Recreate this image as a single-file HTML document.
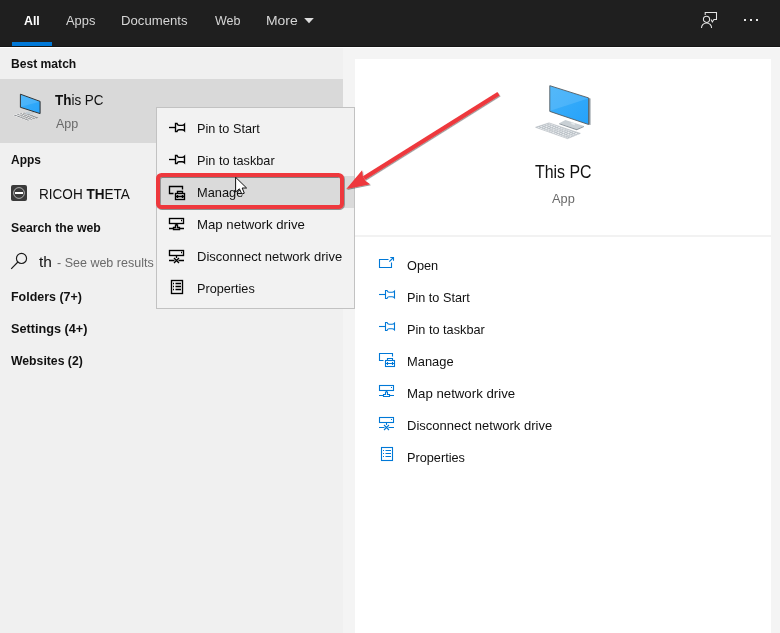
<!DOCTYPE html>
<html><head><meta charset="utf-8"><title>Search</title>
<style>
html,body{margin:0;padding:0}
body{width:780px;height:633px;position:relative;overflow:hidden;background:#f0f0f0;font-family:"Liberation Sans",sans-serif}
.a{position:absolute}
.t{position:absolute;white-space:nowrap;line-height:1;transform-origin:0 0}
.t b{font-weight:700}
svg{overflow:visible}
</style></head><body>

<div class="a" style="left:0;top:0;width:780px;height:46px;background:#1f1f1f"></div>
<div class="a" style="left:0;top:46px;width:780px;height:1px;background:#151515"></div>
<div class="a" style="left:0;top:47px;width:780px;height:1px;background:#ffffff"></div>
<div class="a" style="left:12px;top:42px;width:40px;height:4px;background:#0078d7"></div>
<div class="a" style="left:343px;top:48px;width:437px;height:585px;background:#f4f4f4"></div>
<div class="a" style="left:355px;top:59px;width:416px;height:574px;background:#ffffff"></div>
<div class="a" style="left:355px;top:235px;width:416px;height:2px;background:#f2f2f2"></div>
<div class="a" style="left:0;top:79px;width:343px;height:64px;background:#d9d9d9"></div>
<svg class="a" style="left:303px;top:17px" width="12" height="7" viewBox="0 0 12 7"><path d="M1.2 0.9H10.8L6 6.2Z" fill="#dcdcdc"/></svg>
<svg class="a" style="left:700px;top:10px" width="20" height="20" viewBox="0 0 20 20"><g fill="none" stroke="#e4e4e4" stroke-width="1.05"><path d="M5.2 4.9V2.5H16.5V9.5H13.9L12.3 12L11.1 9.6"/><circle cx="6.5" cy="9.3" r="3.1"/><path d="M1.5 17.9A5.05 5 0 0 1 11.6 17.9"/></g></svg>
<div class="a" style="left:744px;top:19px;width:2px;height:2px;background:#e6e6e6"></div>
<div class="a" style="left:750px;top:19px;width:2px;height:2px;background:#e6e6e6"></div>
<div class="a" style="left:756px;top:19px;width:2px;height:2px;background:#e6e6e6"></div>
<svg class="a" style="left:0;top:0" width="60" height="140" viewBox="0 0 60 140"><defs><linearGradient id="g1" x1="0" y1="0" x2="1" y2="1"><stop offset="0" stop-color="#3fb0f8"/><stop offset="1" stop-color="#25a2fb"/></linearGradient></defs><path d="M12.9 115.3L24.6 112.3L36.2 117.9L28.2 120.9Z" fill="#f3f3f3"/><g transform="matrix(15.3 5.6 11.7 -3.0 12.9 115.3)"><path d="M0.04 0.125H0.96" stroke="#4b5055" stroke-width="0.15" stroke-dasharray="0.045 0.04" fill="none"/><path d="M0.04 0.375H0.96" stroke="#4b5055" stroke-width="0.15" stroke-dasharray="0.045 0.04" fill="none"/><path d="M0.04 0.625H0.96" stroke="#4b5055" stroke-width="0.15" stroke-dasharray="0.045 0.04" fill="none"/><path d="M0.04 0.875H0.96" stroke="#4b5055" stroke-width="0.15" stroke-dasharray="0.045 0.04" fill="none"/></g><ellipse cx="28.8" cy="113" rx="3.4" ry="1.3" fill="#c3cdd4"/><path d="M33 111V113.4" stroke="#aab4bb" stroke-width="0.9"/><path d="M20.4 94.2L40.1 101.4V113.6L20.4 107.3Z" fill="url(#g1)" stroke="#2b2b2b" stroke-width="0.95"/><path d="M20.9 95L39.6 101.8L20.9 106.7Z" fill="#7fcbfb" opacity="0.3"/></svg>
<svg class="a" style="left:11px;top:185px" width="16" height="16" viewBox="0 0 16 16"><rect x="0" y="0" width="16" height="16" rx="2" fill="#3a3a3a"/><circle cx="8" cy="8" r="5.4" fill="none" stroke="#fff" stroke-width="0.7" opacity="0.85"/><rect x="4" y="7" width="8" height="2" fill="#fff"/></svg>
<svg class="a" style="left:10px;top:252px" width="18" height="18" viewBox="0 0 18 18"><g fill="none" stroke="#1a1a1a" stroke-width="1.15"><circle cx="11.5" cy="6.4" r="5.05"/><path d="M7.9 10L1.2 16.9"/></g></svg>
<div class="a" style="left:156px;top:107px;width:197px;height:200px;background:#f2f2f2;border:1px solid #c2c2c2"></div>
<div class="a" style="left:157px;top:176px;width:197px;height:32px;background:#dadada"></div>
<svg class="a" style="left:169px;top:119px" width="16" height="16" viewBox="0 0 16 16"><g fill="none" stroke="#000000" stroke-width="1.35"><path d="M0 8.5H6.5"/><path d="M6.5 4.5H8Q8.7 6.3 10 6.3H13Q14.5 6.3 15.5 5.2V11.8Q14.5 10.7 13 10.7H10Q8.7 10.7 8 12.5H6.5Z"/></g></svg>
<svg class="a" style="left:169px;top:151px" width="16" height="16" viewBox="0 0 16 16"><g fill="none" stroke="#000000" stroke-width="1.35"><path d="M0 8.5H6.5"/><path d="M6.5 4.5H8Q8.7 6.3 10 6.3H13Q14.5 6.3 15.5 5.2V11.8Q14.5 10.7 13 10.7H10Q8.7 10.7 8 12.5H6.5Z"/></g></svg>
<svg class="a" style="left:169px;top:185px" width="16" height="16" viewBox="0 0 16 16"><g fill="none" stroke="#000000" stroke-width="1.35"><path d="M13.5 4.5V1.5H0.5V8.5H4.5"/><rect x="6.5" y="8.5" width="9" height="6"/><path d="M8.5 8.5V6.5H13.5V8.5"/><path d="M6.5 11.5H15.5M8.5 10V13M13.5 10V13"/></g></svg>
<svg class="a" style="left:169px;top:217px" width="16" height="16" viewBox="0 0 16 16"><g fill="none" stroke="#000000" stroke-width="1.35"><rect x="0.5" y="1.5" width="14" height="5"/><path d="M12 3.5H13"/><path d="M6.5 8H8.5V10.5H10.5V12.5H4.5V10.5H6.5Z"/><path d="M7.5 6.5V8"/><path d="M0 11.5H4.5M10.5 11.5H15"/></g></svg>
<svg class="a" style="left:169px;top:249px" width="16" height="16" viewBox="0 0 16 16"><g fill="none" stroke="#000000" stroke-width="1.35"><rect x="0.5" y="1.5" width="14" height="5"/><path d="M12 3.5H13"/><path d="M7.5 6.5V9"/><path d="M5 9L10 14M10 9L5 14"/><path d="M0 11.5H5.5M9.5 11.5H15"/></g></svg>
<svg class="a" style="left:169px;top:279px" width="16" height="16" viewBox="0 0 16 16"><g fill="none" stroke="#000000" stroke-width="1.35"><rect x="2.5" y="1.5" width="11" height="13"/><path d="M4 4.5H5M4 7.5H5M4 10.5H5M6.5 4.5H12M6.5 7.5H12M6.5 10.5H12"/></g></svg>
<svg class="a" style="left:530px;top:80px" width="66" height="62" viewBox="0 0 66 62"><defs><linearGradient id="g2" x1="0" y1="0" x2="1" y2="1"><stop offset="0" stop-color="#3fb0f8"/><stop offset="1" stop-color="#25a2fb"/></linearGradient></defs>
<path d="M5.6 47.3L19 42.9L50.3 53.4L37.5 58.6Z" fill="#b7bec4" stroke="#b9bfc4" stroke-width="0.7"/>
<g transform="matrix(31.9 11.3 13.4 -4.4 5.6 47.3)"><path d="M0.03 0.100H0.97" stroke="#eef0f2" stroke-width="0.12" stroke-dasharray="0.052 0.024" fill="none"/><path d="M0.03 0.300H0.97" stroke="#eef0f2" stroke-width="0.12" stroke-dasharray="0.052 0.024" fill="none"/><path d="M0.03 0.500H0.97" stroke="#eef0f2" stroke-width="0.12" stroke-dasharray="0.052 0.024" fill="none"/><path d="M0.03 0.700H0.97" stroke="#eef0f2" stroke-width="0.12" stroke-dasharray="0.052 0.024" fill="none"/><path d="M0.03 0.900H0.97" stroke="#eef0f2" stroke-width="0.12" stroke-dasharray="0.052 0.024" fill="none"/></g>
<path d="M29.3 43.2L35.4 40.1L53.9 46L46.7 49.1Z" fill="#c9d0d5"/>
<path d="M29.3 43.2L46.7 49.1L53.9 46V47.1L46.7 50.2L29.3 44.3Z" fill="#8f989f"/>
<path d="M41.3 42.2L44.8 43.3V45.2L41.3 44.1Z" fill="#e4e8eb"/>
<path d="M58.6 17.9L60.5 18.5V45.1L58.6 44.5Z" fill="#8a949b"/>
<path d="M19.8 5.7L58.6 17.9V44.5L19.8 31.4Z" fill="url(#g2)" stroke="#555b60" stroke-width="0.9" stroke-linejoin="miter"/>
<path d="M20.4 6.6L58 18.4L20.4 30.7Z" fill="#7fcbfb" opacity="0.32"/></svg>
<svg class="a" style="left:379px;top:256px" width="16" height="16" viewBox="0 0 16 16"><g fill="none" stroke="#0078d7" stroke-width="1.1"><path d="M9.5 3.5H0.5V11.5H12.5V6.5"/><path d="M10.3 5.7L14.5 1.5"/><path d="M11.3 1.5H14.5V4.7"/></g></svg>
<svg class="a" style="left:379px;top:286px" width="16" height="16" viewBox="0 0 16 16"><g fill="none" stroke="#0078d7" stroke-width="1.1"><path d="M0 8.5H6.5"/><path d="M6.5 4.5H8Q8.7 6.3 10 6.3H13Q14.5 6.3 15.5 5.2V11.8Q14.5 10.7 13 10.7H10Q8.7 10.7 8 12.5H6.5Z"/></g></svg>
<svg class="a" style="left:379px;top:318px" width="16" height="16" viewBox="0 0 16 16"><g fill="none" stroke="#0078d7" stroke-width="1.1"><path d="M0 8.5H6.5"/><path d="M6.5 4.5H8Q8.7 6.3 10 6.3H13Q14.5 6.3 15.5 5.2V11.8Q14.5 10.7 13 10.7H10Q8.7 10.7 8 12.5H6.5Z"/></g></svg>
<svg class="a" style="left:379px;top:352px" width="16" height="16" viewBox="0 0 16 16"><g fill="none" stroke="#0078d7" stroke-width="1.1"><path d="M13.5 4.5V1.5H0.5V8.5H4.5"/><rect x="6.5" y="8.5" width="9" height="6"/><path d="M8.5 8.5V6.5H13.5V8.5"/><path d="M6.5 11.5H15.5M8.5 10V13M13.5 10V13"/></g></svg>
<svg class="a" style="left:379px;top:384px" width="16" height="16" viewBox="0 0 16 16"><g fill="none" stroke="#0078d7" stroke-width="1.1"><rect x="0.5" y="1.5" width="14" height="5"/><path d="M12 3.5H13"/><path d="M6.5 8H8.5V10.5H10.5V12.5H4.5V10.5H6.5Z"/><path d="M7.5 6.5V8"/><path d="M0 11.5H4.5M10.5 11.5H15"/></g></svg>
<svg class="a" style="left:379px;top:416px" width="16" height="16" viewBox="0 0 16 16"><g fill="none" stroke="#0078d7" stroke-width="1.1"><rect x="0.5" y="1.5" width="14" height="5"/><path d="M12 3.5H13"/><path d="M7.5 6.5V9"/><path d="M5 9L10 14M10 9L5 14"/><path d="M0 11.5H5.5M9.5 11.5H15"/></g></svg>
<svg class="a" style="left:379px;top:446px" width="16" height="16" viewBox="0 0 16 16"><g fill="none" stroke="#0078d7" stroke-width="1.1"><rect x="2.5" y="1.5" width="11" height="13"/><path d="M4 4.5H5M4 7.5H5M4 10.5H5M6.5 4.5H12M6.5 7.5H12M6.5 10.5H12"/></g></svg>
<div class="t" id="t_all" style="left:24.18px;top:13.87px;font-size:13.5px;font-weight:700;color:#ffffff;transform:scaleX(0.9141)">All</div>
<div class="t" id="t_apps" style="left:66.21px;top:13.87px;font-size:13.5px;font-weight:400;color:#d6d6d6;transform:scaleX(0.9554)">Apps</div>
<div class="t" id="t_docs" style="left:120.94px;top:13.87px;font-size:13.5px;font-weight:400;color:#d6d6d6;transform:scaleX(0.9738)">Documents</div>
<div class="t" id="t_web" style="left:214.54px;top:13.87px;font-size:13.5px;font-weight:400;color:#d6d6d6;transform:scaleX(0.9270)">Web</div>
<div class="t" id="t_more" style="left:266.37px;top:13.87px;font-size:13.5px;font-weight:400;color:#d6d6d6;transform:scaleX(1.0308)">More</div>
<div class="t" id="t_best" style="left:11.22px;top:56.80px;font-size:13px;font-weight:700;color:#111111;transform:scaleX(0.9312)">Best match</div>
<div class="t" id="t_thispc" style="left:55.13px;top:91.80px;font-size:15px;font-weight:400;color:#111111;transform:scaleX(0.8963)"><b>Th</b>is PC</div>
<div class="t" id="t_app" style="left:55.71px;top:116.60px;font-size:13px;font-weight:400;color:#6a6a6a;transform:scaleX(0.9642)">App</div>
<div class="t" id="t_appsh" style="left:10.89px;top:152.90px;font-size:13px;font-weight:700;color:#111111;transform:scaleX(0.9212)">Apps</div>
<div class="t" id="t_ricoh" style="left:38.58px;top:186.10px;font-size:15px;font-weight:400;color:#111111;transform:scaleX(0.9040)">RICOH <b>TH</b>ETA</div>
<div class="t" id="t_sweb" style="left:10.86px;top:220.70px;font-size:13px;font-weight:700;color:#111111;transform:scaleX(0.9401)">Search the web</div>
<div class="t" id="t_th" style="left:39.15px;top:253.80px;font-size:15px;font-weight:400;color:#111111;transform:scaleX(1.0302)">th</div>
<div class="t" id="t_see" style="left:56.69px;top:255.50px;font-size:13px;font-weight:400;color:#6a6a6a;transform:scaleX(0.9623)">- See web results</div>
<div class="t" id="t_fold" style="left:11.21px;top:289.90px;font-size:13px;font-weight:700;color:#111111;transform:scaleX(0.9578)">Folders (7+)</div>
<div class="t" id="t_sett" style="left:10.81px;top:322.30px;font-size:13px;font-weight:700;color:#111111;transform:scaleX(0.9759)">Settings (4+)</div>
<div class="t" id="t_webs" style="left:11.33px;top:353.70px;font-size:13px;font-weight:700;color:#111111;transform:scaleX(0.9402)">Websites (2)</div>
<div class="t" id="m_pin1" style="left:197.19px;top:121.60px;font-size:13px;font-weight:400;color:#111111;transform:scaleX(0.9749)">Pin to Start</div>
<div class="t" id="m_pin2" style="left:197.19px;top:153.60px;font-size:13px;font-weight:400;color:#111111;transform:scaleX(0.9767)">Pin to taskbar</div>
<div class="t" id="m_man" style="left:197.19px;top:185.60px;font-size:13px;font-weight:400;color:#111111;transform:scaleX(0.9852)">Manage</div>
<div class="t" id="m_map" style="left:197.18px;top:217.60px;font-size:13px;font-weight:400;color:#111111;transform:scaleX(1.0153)">Map network drive</div>
<div class="t" id="m_dis" style="left:197.18px;top:249.60px;font-size:13px;font-weight:400;color:#111111;transform:scaleX(0.9993)">Disconnect network drive</div>
<div class="t" id="m_prop" style="left:197.19px;top:281.60px;font-size:13px;font-weight:400;color:#111111;transform:scaleX(0.9747)">Properties</div>
<div class="t" id="r_title" style="left:534.65px;top:161.82px;font-size:19px;font-weight:400;color:#111111;transform:scaleX(0.8373)">This PC</div>
<div class="t" id="r_app" style="left:552.24px;top:191.90px;font-size:13px;font-weight:400;color:#6a6a6a;transform:scaleX(0.9828)">App</div>
<div class="t" id="r_open" style="left:406.95px;top:258.70px;font-size:13px;font-weight:400;color:#111111;transform:scaleX(0.9801)">Open</div>
<div class="t" id="r_pin1" style="left:407.19px;top:290.70px;font-size:13px;font-weight:400;color:#111111;transform:scaleX(0.9752)">Pin to Start</div>
<div class="t" id="r_pin2" style="left:407.19px;top:322.70px;font-size:13px;font-weight:400;color:#111111;transform:scaleX(0.9786)">Pin to taskbar</div>
<div class="t" id="r_man" style="left:407.19px;top:354.70px;font-size:13px;font-weight:400;color:#111111;transform:scaleX(0.9906)">Manage</div>
<div class="t" id="r_map" style="left:407.18px;top:386.70px;font-size:13px;font-weight:400;color:#111111;transform:scaleX(1.0178)">Map network drive</div>
<div class="t" id="r_dis" style="left:407.18px;top:418.70px;font-size:13px;font-weight:400;color:#111111;transform:scaleX(0.9993)">Disconnect network drive</div>
<div class="t" id="r_prop" style="left:407.19px;top:450.70px;font-size:13px;font-weight:400;color:#111111;transform:scaleX(0.9771)">Properties</div>
<svg class="a" style="left:235px;top:177px" width="13" height="21" viewBox="0 0 13 21"><path d="M0.6 0.3V15L4.4 11.8L6.9 17.1L9.3 16.2L7.2 11H11.6Z" fill="#fff" stroke="#111" stroke-width="1"/></svg>
<svg class="a" style="left:0;top:0" width="780" height="633" viewBox="0 0 780 633">
<defs><filter id="sh" x="-5%" y="-5%" width="110%" height="110%"><feDropShadow dx="0.7" dy="0.9" stdDeviation="0.5" flood-color="#000" flood-opacity="0.45"/></filter></defs>
<g filter="url(#sh)">
<rect x="158" y="175" width="184" height="32" rx="3.5" fill="none" stroke="#ee383c" stroke-width="4"/>
<path d="M498.5 93.8L364 178" stroke="#ee383c" stroke-width="4.2" fill="none"/>
<path d="M346.3 189L362.1 170.3L362.8 176.2L365.6 180.9L370.1 184.2Z" fill="#ee383c"/>
</g></svg>
</body></html>
